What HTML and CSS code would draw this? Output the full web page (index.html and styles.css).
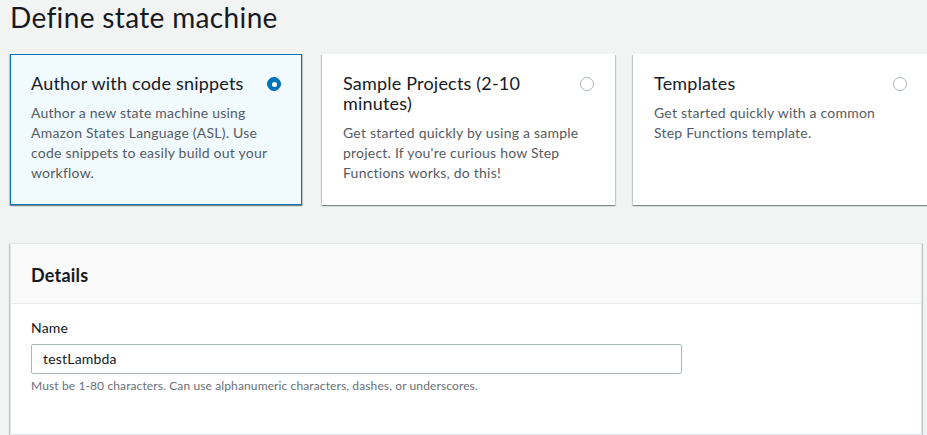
FILE: index.html
```html
<!DOCTYPE html>
<html lang="en">
<head>
<meta charset="utf-8">
<title>Define state machine</title>
<link rel="stylesheet" href="styles.css">
</head>
<body>
<main class="page">
  <h1 class="page-title">Define state machine</h1>
  <div class="tiles">
    <div class="tile tile-selected">
      <div class="tile-head">
        <div class="tile-title">Author with code snippets</div>
        <span class="radio radio-on"></span>
      </div>
      <p class="tile-desc">Author a new state machine using Amazon States Language (ASL). Use code snippets to easily build out your workflow.</p>
    </div>
    <div class="tile">
      <div class="tile-head">
        <div class="tile-title">Sample Projects (2-10 minutes)</div>
        <span class="radio"></span>
      </div>
      <p class="tile-desc">Get started quickly by using a sample project. If you're curious how Step Functions works, do this!</p>
    </div>
    <div class="tile">
      <div class="tile-head">
        <div class="tile-title">Templates</div>
        <span class="radio"></span>
      </div>
      <p class="tile-desc">Get started quickly with a common Step Functions template.</p>
    </div>
  </div>
  <section class="panel">
    <div class="panel-head">
      <h2 class="panel-title">Details</h2>
    </div>
    <div class="panel-body">
      <label class="field-label">Name</label>
      <div class="input">testLambda</div>
      <div class="hint">Must be 1-80 characters. Can use alphanumeric characters, dashes, or underscores.</div>
    </div>
  </section>
</main>
</body>
</html>
```
FILE: styles.css
```css
* { box-sizing: border-box; }
html, body { margin: 0; padding: 0; }
body {
  background: #f2f3f3;
  font-family: Lato, "Open Sans", sans-serif;
  color: #16191f;
  width: 927px;
  height: 435px;
  overflow: hidden;
}
.page {
  padding: 0 0 0 10px;
}
.page-title {
  margin: 0;
  font-size: 28px;
  line-height: 34px;
  font-weight: 400;
  letter-spacing: 0.35px;
  color: #16191f;
}
.tiles {
  margin-top: 20px;
  display: grid;
  grid-template-columns: 292px 293px 293px;
  column-gap: 20px;
}
.tiles .tile:nth-child(3) { margin-left: -2px; }
.tile {
  height: 151px;
  background: #fff;
  border: 1px solid transparent;
  box-shadow: 0 1px 1px 0 rgba(0,28,36,.3), 1px 1px 1px 0 rgba(0,28,36,.15), -1px 1px 1px 0 rgba(0,28,36,.15);
  padding: 18px 20px 0 20px;
}
.tile-selected {
  background: #f1faff;
  border-color: #0073bb;
}
.tile-head {
  display: flex;
  justify-content: space-between;
  align-items: flex-start;
  gap: 16px;
}
.tile-title {
  font-size: 18px;
  line-height: 20px;
  letter-spacing: 0.2px;
  color: #16191f;
}
.radio {
  flex: none;
  width: 14px;
  height: 14px;
  margin-top: 4px;
  border-radius: 50%;
  border: 1px solid #aab7b8;
  background: #fff;
}
.radio-on {
  background: #0073bb;
  border-color: #0073bb;
  display: flex;
  align-items: center;
  justify-content: center;
}
.radio-on::after {
  content: "";
  width: 5px;
  height: 5px;
  border-radius: 50%;
  background: #fff;
}
.tile-desc {
  margin: 10px 0 0 0;
  font-size: 14px;
  line-height: 20px;
  letter-spacing: 0.22px;
  color: #545b64;
}
.panel {
  margin-top: 38px;
  width: 912px;
  background: #fff;
  border: 1px solid #e1e4e4;
  box-shadow: 0 1px 1px 0 rgba(0,28,36,.3), 1px 1px 1px 0 rgba(0,28,36,.15), -1px 1px 1px 0 rgba(0,28,36,.15);
}
.panel-head {
  height: 60px;
  background: #fafafa;
  border-bottom: 1px solid #eaeded;
  padding: 0 20px;
  display: flex;
  align-items: center;
}
.panel-title {
  margin: 2px 0 0 0;
  font-size: 18px;
  line-height: 20px;
  font-weight: 700;
  letter-spacing: 0.2px;
  color: #16191f;
}
.panel-body {
  padding: 14px 240px 40px 20px;
}
.field-label {
  display: block;
  font-size: 14px;
  line-height: 20px;
  letter-spacing: 0.2px;
  color: #16191f;
}
.input {
  margin-top: 6px;
  height: 30px;
  border: 1px solid #aab7b8;
  border-radius: 2px;
  padding: 0 11px;
  font-size: 14px;
  line-height: 28px;
  letter-spacing: 0.2px;
  color: #16191f;
  width: 651px;
}
.hint {
  margin-top: 4px;
  font-size: 12px;
  line-height: 16px;
  letter-spacing: 0.12px;
  color: #687078;
}
```
